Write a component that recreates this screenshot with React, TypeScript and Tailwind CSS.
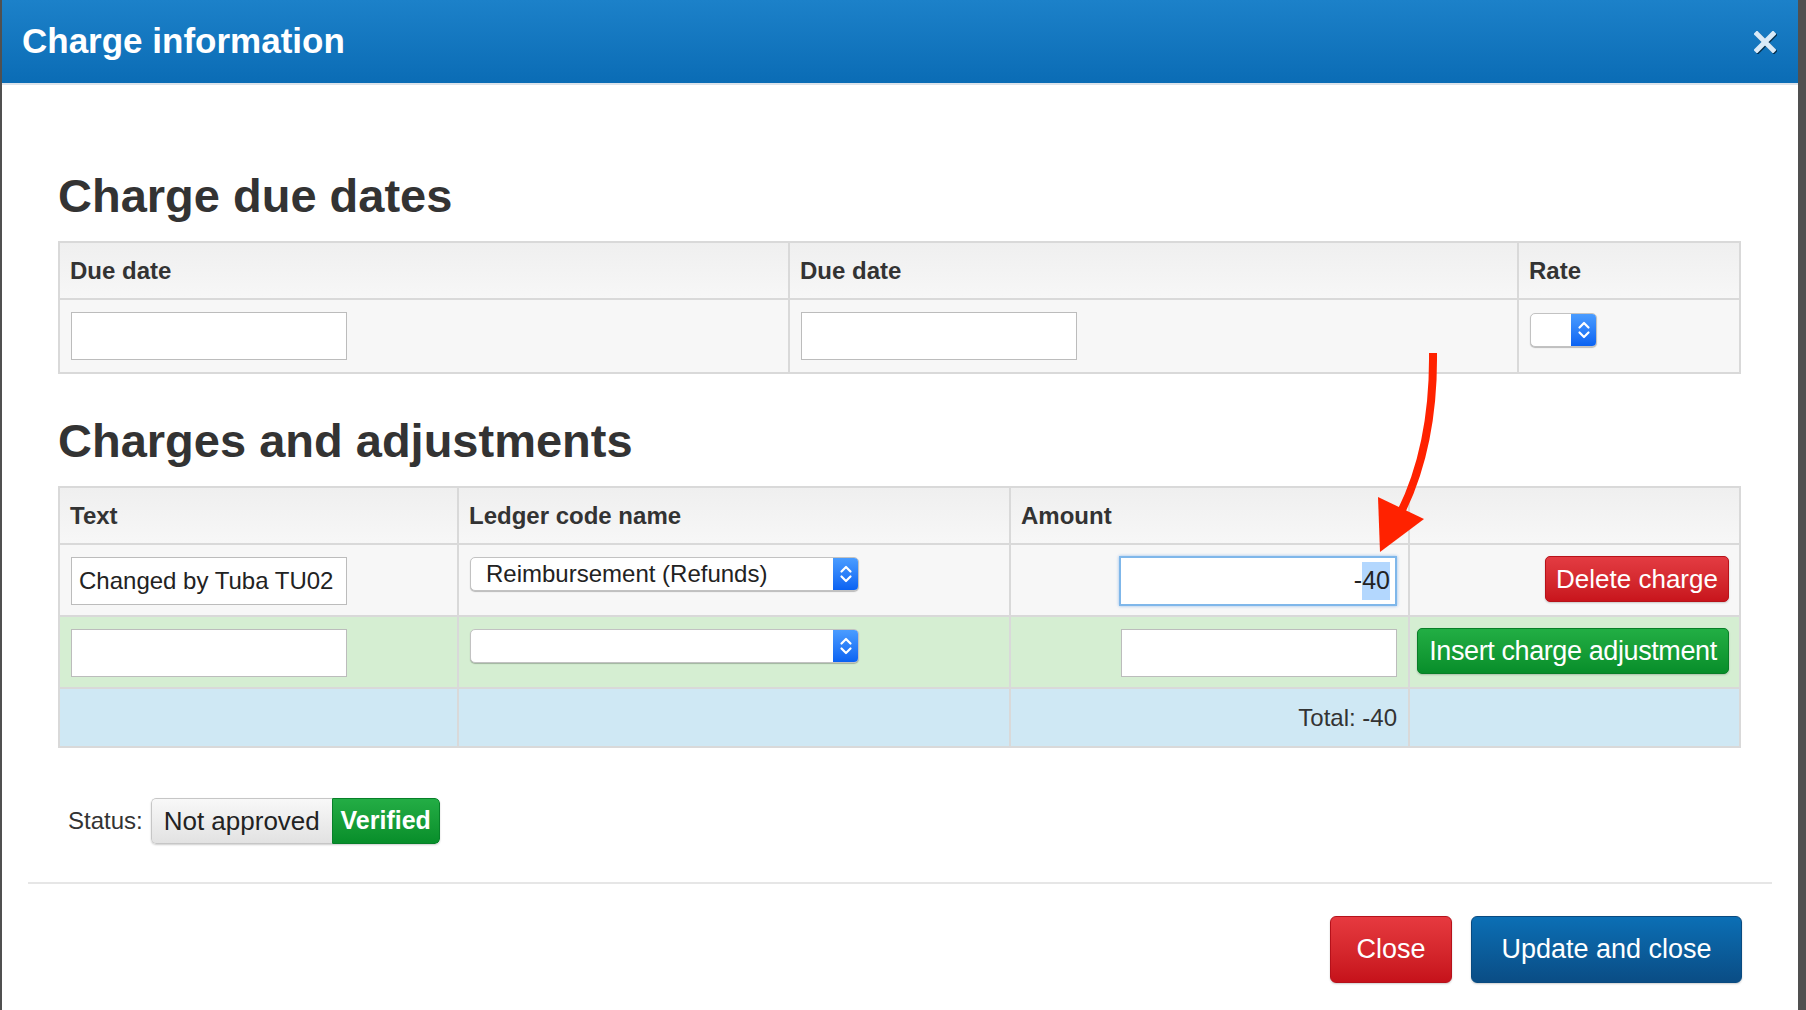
import React from "react";

const border = "border-[#d9d9d9]";

function Chevrons() {
  return (
    <svg width="14" height="24" viewBox="0 0 14 24" fill="none">
      <path d="M2.5 9.5 L7 5 L11.5 9.5" stroke="white" strokeWidth="2.2" strokeLinecap="round" strokeLinejoin="round" />
      <path d="M2.5 14.5 L7 19 L11.5 14.5" stroke="white" strokeWidth="2.2" strokeLinecap="round" strokeLinejoin="round" />
    </svg>
  );
}

function MacSelect({ value, width }: { value?: string; width: string }) {
  return (
    <div
      className={`${width} h-[34px] flex rounded-[5px] bg-white border border-[#c2c2c2] shadow-[0_1px_1px_rgba(0,0,0,0.25)] overflow-hidden`}
    >
      <div className="flex-1 flex items-center pl-[15px] text-[24px] text-[#222]">{value}</div>
      <div className="w-[25px] flex items-center justify-center bg-gradient-to-b from-[#4a9cff] to-[#0a62f2]">
        <Chevrons />
      </div>
    </div>
  );
}

function TextBox({ value }: { value?: string }) {
  return (
    <div className="w-[276px] h-[48px] bg-white border border-[#bcbcbc] flex items-center px-[7px] text-[24px] text-[#222]">
      {value}
    </div>
  );
}

export default function App() {
  return (
    <div className="relative w-[1806px] h-[1010px] overflow-hidden bg-[#505050] pl-[2px] pr-[8px] font-['Liberation_Sans',Arial,sans-serif] text-[#333]">
      <div className="h-full bg-white flex flex-col">
        {/* header */}
        <div className="h-[83px] shrink-0 flex items-center justify-between pl-[20px] pr-[22px] bg-gradient-to-b from-[#1c81c9] to-[#0a6cb5] border-b-2 border-[#dde3ea] box-content">
          <h1 className="text-[35px] font-bold text-white">Charge information</h1>
          <svg width="22" height="22" viewBox="0 0 22 22" className="drop-shadow-[1px_1px_0_rgba(0,0,0,0.6)]">
            <path d="M3 3 L19 19 M19 3 L3 19" stroke="#d9eaf8" strokeWidth="5" strokeLinecap="square" />
          </svg>
        </div>

        <div className="flex flex-col pl-[56px]">
          {/* Charge due dates */}
          <h2 className="mt-[83px] h-[56px] leading-[56px] text-[47px] font-bold text-[#333]">Charge due dates</h2>
          <table className={`mt-[17px] w-[1683px] table-fixed border-collapse border-2 ${border}`}>
            <thead>
              <tr className="h-[57px] bg-gradient-to-b from-[#efefef] to-[#f7f7f7]">
                <th className={`w-[730px] border-2 ${border} text-left pl-[10px] text-[24px] font-bold`}>Due date</th>
                <th className={`w-[729px] border-2 ${border} text-left pl-[10px] text-[24px] font-bold`}>Due date</th>
                <th className={`border-2 ${border} text-left pl-[10px] text-[24px] font-bold`}>Rate</th>
              </tr>
            </thead>
            <tbody>
              <tr className="h-[74px] bg-[#f7f7f7]">
                <td className={`border-2 ${border} pl-[11px] align-top pt-[12px]`}>
                  <TextBox />
                </td>
                <td className={`border-2 ${border} pl-[11px] align-top pt-[12px]`}>
                  <TextBox />
                </td>
                <td className={`border-2 ${border} pl-[11px] align-top pt-[13px]`}>
                  <MacSelect width="w-[67px]" />
                </td>
              </tr>
            </tbody>
          </table>

          {/* Charges and adjustments */}
          <h2 className="mt-[39px] h-[56px] leading-[56px] text-[47px] font-bold text-[#333]">Charges and adjustments</h2>
          <table className={`mt-[17px] w-[1683px] table-fixed border-collapse border-2 ${border}`}>
            <thead>
              <tr className="h-[57px] bg-gradient-to-b from-[#efefef] to-[#f7f7f7]">
                <th className={`w-[399px] border-2 ${border} text-left pl-[10px] text-[24px] font-bold`}>Text</th>
                <th className={`w-[552px] border-2 ${border} text-left pl-[10px] text-[24px] font-bold`}>Ledger code name</th>
                <th className={`w-[399px] border-2 ${border} text-left pl-[10px] text-[24px] font-bold`}>Amount</th>
                <th className={`border-2 ${border}`}></th>
              </tr>
            </thead>
            <tbody>
              <tr className="h-[72px] bg-[#f7f7f7]">
                <td className={`border-2 ${border} pl-[11px] align-top pt-[12px]`}>
                  <TextBox value="Changed by Tuba TU02" />
                </td>
                <td className={`border-2 ${border} pl-[11px] align-top pt-[12px]`}>
                  <MacSelect width="w-[389px]" value="Reimbursement (Refunds)" />
                </td>
                <td className={`border-2 ${border} pr-[11px] align-top pt-[11px]`}>
                  <div className="ml-auto w-[278px] h-[50px] bg-white border-2 border-[#7fb7ea] shadow-[0_0_3px_rgba(80,150,230,0.6)] flex items-center justify-end pr-[5px] text-[25px] text-[#222]">
                    -<span className="bg-[#b3d7fe]">40</span>
                  </div>
                </td>
                <td className={`border-2 ${border} pr-[10px] align-top pt-[11px]`}>
                  <div className="ml-auto w-[184px] h-[46px] rounded-[5px] flex items-center justify-center text-[26px] text-white bg-gradient-to-b from-[#e33b42] to-[#c8141c] border border-[#b81219] shadow-[0_1px_2px_rgba(0,0,0,0.2)]">
                    Delete charge
                  </div>
                </td>
              </tr>
              <tr className="h-[72px] bg-[#d5eed2]">
                <td className={`border-2 ${border} pl-[11px] align-top pt-[12px]`}>
                  <TextBox />
                </td>
                <td className={`border-2 ${border} pl-[11px] align-top pt-[12px]`}>
                  <MacSelect width="w-[389px]" />
                </td>
                <td className={`border-2 ${border} pr-[11px] align-top pt-[12px]`}>
                  <div className="ml-auto w-[276px] h-[48px] bg-white border border-[#bcbcbc]" />
                </td>
                <td className={`border-2 ${border} pr-[10px] align-top pt-[11px]`}>
                  <div className="ml-auto w-[312px] h-[46px] rounded-[5px] flex items-center justify-center text-[27px] tracking-[-0.4px] text-white bg-gradient-to-b from-[#22ae44] to-[#078e2a] border border-[#087f27] shadow-[0_1px_2px_rgba(0,0,0,0.2)]">
                    Insert charge adjustment
                  </div>
                </td>
              </tr>
              <tr className="h-[59px] bg-[#cfe8f4]">
                <td className={`border-2 ${border}`}></td>
                <td className={`border-2 ${border}`}></td>
                <td className={`border-2 ${border} text-right pr-[11px] text-[24px] text-[#333]`}>Total: -40</td>
                <td className={`border-2 ${border}`}></td>
              </tr>
            </tbody>
          </table>

          {/* Status */}
          <div className="mt-[50px] flex items-center pl-[10px]">
            <span className="text-[24px] text-[#333] mr-[8px]">Status:</span>
            <div className="flex h-[46px] rounded-[5px] overflow-hidden shadow-[0_1px_2px_rgba(0,0,0,0.2)]">
              <div className="w-[181px] flex items-center justify-center text-[26px] text-[#222] bg-gradient-to-b from-[#f8f8f8] to-[#e2e2e2] border border-r-0 border-[#c6c6c6] rounded-l-[5px]">
                Not approved
              </div>
              <div className="w-[108px] flex items-center justify-center text-[25px] font-bold text-white bg-gradient-to-b from-[#23ad45] to-[#078e2a] border border-[#078029] rounded-r-[5px]">
                Verified
              </div>
            </div>
          </div>
        </div>

        {/* footer */}
        <div className="mt-[38px] mx-[26px] border-t-2 border-[#e6e6e6]" />
        <div className="mt-[32px] flex justify-end gap-[19px] pr-[56px]">
          <div className="w-[122px] h-[67px] rounded-[6px] flex items-center justify-center text-[27px] text-white bg-gradient-to-b from-[#e6393f] to-[#c6111a] border border-[#b5111a] shadow-[0_1px_2px_rgba(0,0,0,0.2)]">
            Close
          </div>
          <div className="w-[271px] h-[67px] rounded-[6px] flex items-center justify-center text-[27px] text-white bg-gradient-to-b from-[#0b6fb5] to-[#0a4d85] border border-[#094a80] shadow-[0_1px_2px_rgba(0,0,0,0.2)]">
            Update and close
          </div>
        </div>
      </div>

      {/* annotation arrow */}
      <svg className="absolute left-0 top-0 pointer-events-none" width="1806" height="1010" viewBox="0 0 1806 1010">
        <path d="M1433 353 Q1434 445 1401 512" stroke="#ff2200" strokeWidth="8" fill="none" />
        <polygon points="1380,552 1378,497 1424,519" fill="#ff2200" />
      </svg>
    </div>
  );
}
